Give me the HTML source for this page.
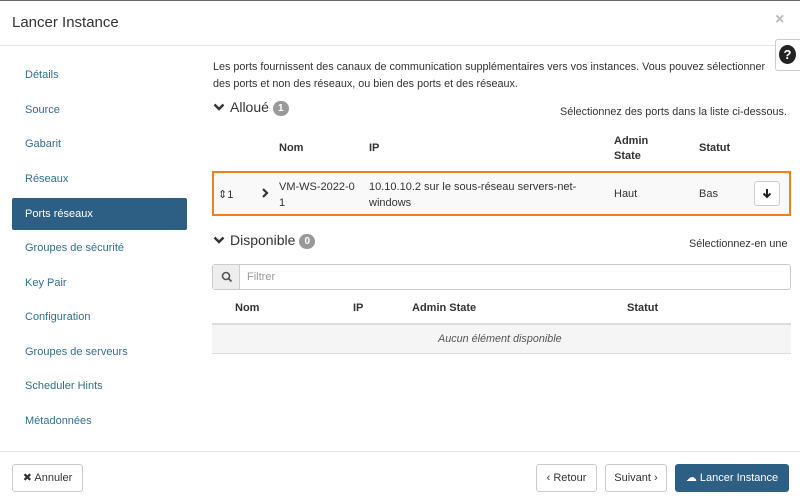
<!DOCTYPE html>
<html><head><meta charset="utf-8"><style>
*{box-sizing:border-box;margin:0;padding:0}
body{width:800px;height:502px;background:#fff;font-family:"Liberation Sans",sans-serif;font-size:11px;color:#333;position:relative;overflow:hidden}
.a{position:absolute;white-space:nowrap}
.nav{position:absolute;left:12px;width:175px;height:32px;line-height:32px;padding-left:13px;color:#31708f;font-size:11px}
.nav.act{background:#2d5f84;color:#fff;border-radius:2px}
.badge{display:inline-block;background:#999;color:#fff;border-radius:8px;font-size:10px;font-weight:bold;width:16px;height:15px;line-height:15px;text-align:center;vertical-align:1px}
.th{font-weight:bold;font-size:11px}
.btn{position:absolute;border:1px solid #ccc;border-radius:3px;background:#fff;height:28px;line-height:26px;text-align:center;font-size:11px;color:#333}
</style></head><body>
<div class="a" style="left:0;top:0;width:800px;height:1px;background:#666"></div>
<div class="a" style="left:12px;top:14px;font-size:15px;color:#333">Lancer Instance</div>
<div class="a" style="left:775px;top:11px;font-size:16px;color:#bbb;font-weight:bold">×</div>
<div class="a" style="left:0;top:45px;width:800px;height:1px;background:#e5e5e5"></div>
<div class="a" style="left:775px;top:39px;width:26px;height:32px;border:1px solid #ccc;border-right:none;border-radius:3px 0 0 3px;background:#fff"></div>
<div class="a" style="left:779px;top:45px;width:17px;height:19px;border-radius:50%;background:#222;color:#fff;font-weight:bold;font-size:13px;text-align:center;line-height:19px">?</div>

<div class="nav" style="top:59px">Détails</div>
<div class="nav" style="top:94px">Source</div>
<div class="nav" style="top:128px">Gabarit</div>
<div class="nav" style="top:163px">Réseaux</div>
<div class="nav act" style="top:198px">Ports réseaux</div>
<div class="nav" style="top:232px">Groupes de sécurité</div>
<div class="nav" style="top:267px">Key Pair</div>
<div class="nav" style="top:301px">Configuration</div>
<div class="nav" style="top:336px">Groupes de serveurs</div>
<div class="nav" style="top:370px">Scheduler Hints</div>
<div class="nav" style="top:405px">Métadonnées</div>

<div class="a" style="left:213px;top:59px;line-height:17px;font-size:10.8px">Les ports fournissent des canaux de communication supplémentaires vers vos instances. Vous pouvez sélectionner<br>des ports et non des réseaux, ou bien des ports et des réseaux.</div>

<svg class="a" style="left:213px;top:102px" width="12" height="10"><path d="M1.5 2.5 6 7 10.5 2.5" stroke="#333" stroke-width="2.4" fill="none"/></svg>
<div class="a" style="left:230px;top:99px;font-size:14px">Alloué <span class="badge">1</span></div>
<div class="a" style="left:560px;top:106px;font-size:10.8px">Sélectionnez des ports dans la liste ci-dessous.</div>
<div class="a th" style="left:279px;top:142px">Nom</div>
<div class="a th" style="left:369px;top:142px">IP</div>
<div class="a th" style="left:614px;top:134px;line-height:15px">Admin<br>State</div>
<div class="a th" style="left:699px;top:142px">Statut</div>
<div class="a" style="left:212px;top:171px;width:579px;height:45px;border:2px solid #f0801f;background:#f9f9f9"></div>
<div class="a" style="left:218px;top:188px">⇕1</div>
<svg class="a" style="left:261px;top:188px" width="8" height="10"><path d="M2 1 6 5 2 9" stroke="#333" stroke-width="2.2" fill="none"/></svg>
<div class="a" style="left:279px;top:179px;line-height:16px">VM-WS-2022-0<br>1</div>
<div class="a" style="left:369px;top:179px;line-height:16px">10.10.10.2 sur le sous-réseau servers-net-<br>windows</div>
<div class="a" style="left:614px;top:188px">Haut</div>
<div class="a" style="left:699px;top:188px">Bas</div>
<div class="a" style="left:754px;top:181px;width:26px;height:25px;border:1px solid #ccc;border-radius:3px;background:#fff"></div>
<svg class="a" style="left:762px;top:188px" width="10" height="11"><path d="M5 1v8M1.5 5.5 5 9 8.5 5.5" stroke="#222" stroke-width="2" fill="none"/></svg>

<svg class="a" style="left:213px;top:235px" width="12" height="10"><path d="M1.5 2.5 6 7 10.5 2.5" stroke="#333" stroke-width="2.4" fill="none"/></svg>
<div class="a" style="left:230px;top:232px;font-size:14px">Disponible <span class="badge">0</span></div>
<div class="a" style="left:689px;top:238px;font-size:10.8px">Sélectionnez-en une</div>
<div class="a" style="left:212px;top:264px;width:579px;height:26px;border:1px solid #ccc;border-radius:3px"></div>
<div class="a" style="left:213px;top:265px;width:27px;height:24px;background:#eee;border-right:1px solid #ccc"></div>
<svg class="a" style="left:221px;top:271px" width="12" height="12"><circle cx="5" cy="5" r="3.5" stroke="#555" stroke-width="1.6" fill="none"/><path d="M7.5 7.5 10.5 10.5" stroke="#555" stroke-width="1.8"/></svg>
<div class="a" style="left:247px;top:271px;color:#999">Filtrer</div>
<div class="a th" style="left:235px;top:302px">Nom</div>
<div class="a th" style="left:353px;top:302px">IP</div>
<div class="a th" style="left:412px;top:302px">Admin State</div>
<div class="a th" style="left:627px;top:302px">Statut</div>
<div class="a" style="left:212px;top:323px;width:579px;height:31px;background:#f5f5f5;border-top:2px solid #ddd;border-bottom:1px solid #ddd"></div>
<div class="a" style="left:438px;top:333px;font-style:italic;color:#555;font-size:10.8px">Aucun élément disponible</div>

<div class="a" style="left:0;top:451px;width:800px;height:1px;background:#e5e5e5"></div>
<div class="btn" style="left:12px;top:464px;width:71px">✖ Annuler</div>
<div class="btn" style="left:536px;top:464px;width:61px">‹ Retour</div>
<div class="btn" style="left:605px;top:464px;width:62px">Suivant ›</div>
<div class="btn" style="left:675px;top:464px;width:114px;background:#2d5f84;border-color:#2d5f84;color:#fff">☁ Lancer Instance</div>
</body></html>
